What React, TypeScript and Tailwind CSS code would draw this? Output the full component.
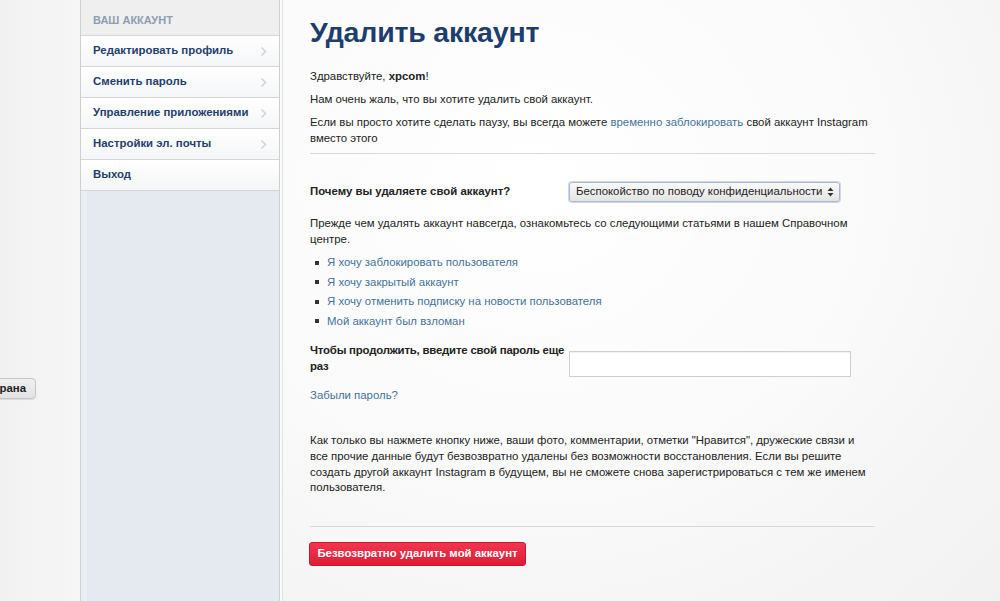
import React from "react";

const links = [
  "Я хочу заблокировать пользователя",
  "Я хочу закрытый аккаунт",
  "Я хочу отменить подписку на новости пользователя",
  "Мой аккаунт был взломан",
];

const menu = [
  { t: "Редактировать профиль", c: true },
  { t: "Сменить пароль", c: true },
  { t: "Управление приложениями", c: true },
  { t: "Настройки эл. почты", c: true },
  { t: "Выход", c: false },
];

function Chevron() {
  return (
    <svg width="7" height="11" viewBox="0 0 7 11" className="shrink-0">
      <path d="M1.5 1.5 L5.5 5.5 L1.5 9.5" fill="none" stroke="#d4d4d4" strokeWidth="1.6" />
    </svg>
  );
}

export default function App() {
  return (
    <div className="flex w-[1000px] h-[601px] overflow-hidden bg-[#f3f3f3] font-['Liberation_Sans',Arial,sans-serif] text-[11.4px] text-[#222]">
      {/* left strip */}
      <div className="w-[80px] shrink-0 flex flex-col bg-gradient-to-r from-[#f1f1f1] to-[#f6f6f6]">
        <div className="mt-[378px] -ml-[24px] w-[60px] h-[21px] rounded-[4px] border border-[#c6c6c6] bg-gradient-to-b from-[#f0f0f0] to-[#e2e2e2] flex items-center justify-end pr-[9px] font-bold text-[11.4px] text-[#222] shadow-[0_1px_1px_rgba(0,0,0,0.1)]">
          рана
        </div>
      </div>

      {/* sidebar */}
      <aside className="w-[200px] shrink-0 flex flex-col border-l border-r border-[#cfcfcf] bg-[#e6ecf1]">
        <div className="h-[36px] bg-[#efefef] border-b border-[#d6d6d6] flex items-center pl-[12px] pt-[5px] font-bold text-[11px] text-[#8d9db2] uppercase">
          Ваш аккаунт
        </div>
        {menu.map((m) => (
          <div
            key={m.t}
            className="h-[31px] flex items-center justify-between pl-[12px] pr-[12px] border-b border-[#d6d6d6] bg-gradient-to-b from-[#ffffff] to-[#f5f6f7] font-bold text-[11.4px] text-[#1f3f6e]"
          >
            <span>{m.t}</span>
            {m.c && <Chevron />}
          </div>
        ))}
        <div className="flex-1 border-l-[6px] border-[#e9eef2] bg-[#e4eaef]" />
      </aside>
      <div className="w-[3px] shrink-0 bg-[#fbfbfb] border-r border-[#e2e2e2]" />

      {/* main */}
      <main className="flex-1 bg-[radial-gradient(ellipse_at_35%_30%,#ffffff_0%,#fbfbfb_45%,#f1f1f1_100%)] pl-[27px] pt-[14px]">
        <div className="w-[565px]">
          <h1 className="font-bold text-[28.5px] leading-[36px] text-[#1c3d6e] tracking-[-0.2px]">
            Удалить аккаунт
          </h1>
          <p className="mt-[18px] leading-[16px]">
            Здравствуйте, <b>xpcom</b>!
          </p>
          <p className="mt-[7px] leading-[16px]">Нам очень жаль, что вы хотите удалить свой аккаунт.</p>
          <p className="mt-[7px] leading-[16px]">
            Если вы просто хотите сделать паузу, вы всегда можете{" "}
            <span className="text-[#3f729b]">временно заблокировать</span> свой аккаунт Instagram вместо этого
          </p>
          <div className="mt-[7px] border-t border-[#d9d9d9]" />

          <div className="mt-[28px] flex items-center">
            <div className="w-[259px] font-bold">Почему вы удаляете свой аккаунт?</div>
            <div className="w-[271px] h-[20px] rounded-[3px] border border-[#a9b8cc] bg-gradient-to-b from-[#fafafa] to-[#e4e4e4] shadow-[0_0_0_1px_#cbd9ea] flex items-center justify-between pl-[6px] pr-[5px]">
              <span>Беспокойство по поводу конфиденциальности</span>
              <svg width="7" height="10" viewBox="0 0 7 10">
                <path d="M3.5 0.5 L6.5 4 L0.5 4 Z M3.5 9.5 L6.5 6 L0.5 6 Z" fill="#333" />
              </svg>
            </div>
          </div>

          <p className="mt-[13px] leading-[16px] pr-[4px]">
            Прежде чем удалять аккаунт навсегда, ознакомьтесь со следующими статьями в нашем Справочном центре.
          </p>
          <ul className="mt-[6px] flex flex-col">
            {links.map((l) => (
              <li key={l} className="flex items-center h-[19.5px]">
                <span className="w-[4px] h-[4px] bg-[#333] ml-[5px] mr-[8px]" />
                <span className="text-[#3f729b]">{l}</span>
              </li>
            ))}
          </ul>

          <div className="mt-[11px] flex items-start">
            <div className="w-[259px] font-bold leading-[16px] tracking-[-0.2px]">
              Чтобы продолжить, введите свой пароль еще раз
            </div>
            <div className="w-[282px] h-[26px] border border-[#cfcfcf] bg-white shadow-[inset_0_1px_1px_rgba(0,0,0,0.06)] mt-[9px]" />
          </div>
          <div className="mt-[10px] text-[#3f729b]">Забыли пароль?</div>

          <p className="mt-[29px] leading-[15.7px] pr-[6px]">
            Как только вы нажмете кнопку ниже, ваши фото, комментарии, отметки "Нравится", дружеские связи и все прочие данные будут безвозвратно удалены без возможности восстановления. Если вы решите создать другой аккаунт Instagram в будущем, вы не сможете снова зарегистрироваться с тем же именем пользователя.
          </p>
          <div className="mt-[30px] border-t border-[#d9d9d9]" />
          <button className="mt-[15px] -ml-[1px] w-[217px] h-[24px] rounded-[3px] bg-gradient-to-b from-[#f0364f] to-[#e01a35] border border-[#d0162f] text-white text-[11.4px] font-bold flex items-center justify-center">
            Безвозвратно удалить мой аккаунт
          </button>
        </div>
      </main>
    </div>
  );
}
